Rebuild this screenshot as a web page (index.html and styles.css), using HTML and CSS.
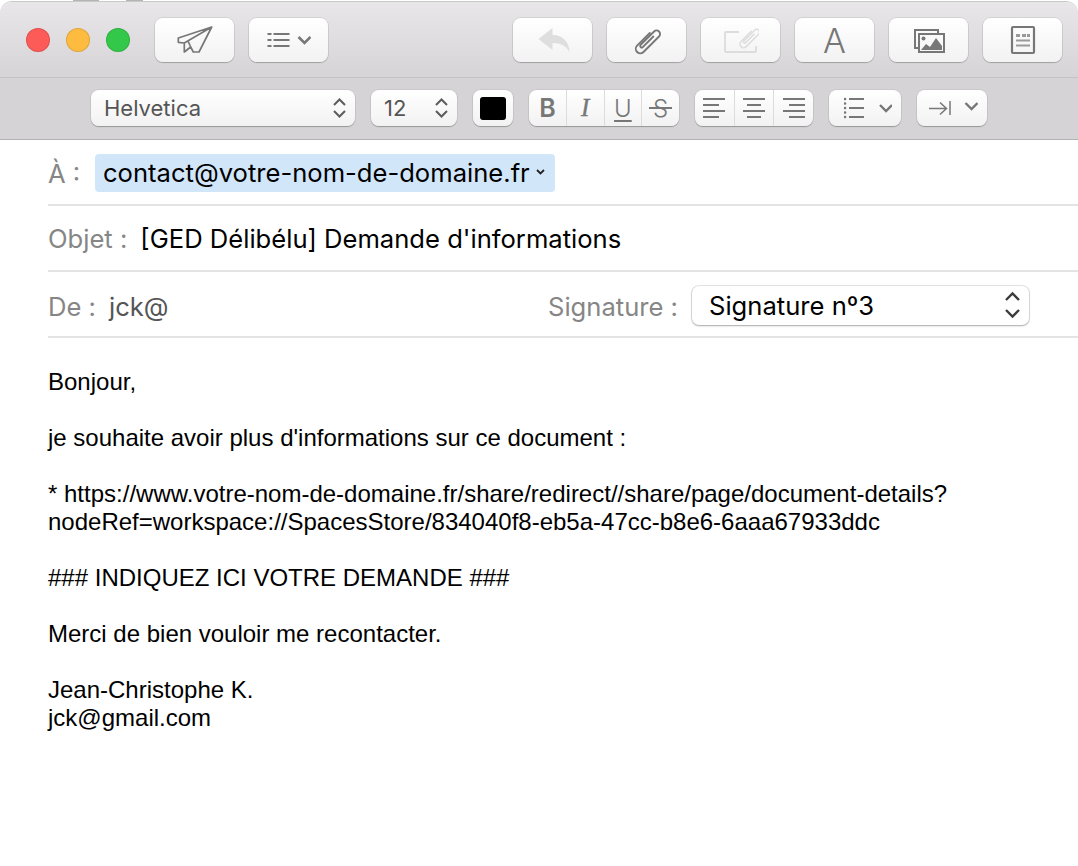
FILE: index.html
```html
<!DOCTYPE html>
<html lang="fr">
<head>
<meta charset="utf-8">
<title>Nouveau message</title>
<link rel="stylesheet" href="styles.css">
</head>
<body>
<div class="backdrop-tab tab-a"></div>
<div class="backdrop-tab tab-b"></div>
<header class="toolbar">
  <div class="main-row">
    <div class="lights">
      <span class="light red"></span>
      <span class="light yellow"></span>
      <span class="light green"></span>
    </div>
    <button class="tool">
      <svg width="36" height="28" viewBox="0 0 36 28" fill="none" stroke="#777" stroke-width="1.7" stroke-linejoin="round"><path d="M34.7 1 1.3 12v4.3l6 .7v9l6.4-5 2.6 5H22L34.7 1ZM34.700 1 7.300 17M13.700 21 11 15"/></svg>
    </button>
    <button class="tool">
      <svg width="44" height="16" viewBox="-.5 0 44 16" fill="none" stroke="#777" stroke-width="2"><path d="M0 2h4M6 2h16M0 8h4M6 8h16M0 14h4M6 14h16"/><path d="m31 5 6 6 6-6" stroke-width="2.600"/></svg>
    </button>
    <div class="spring"></div>
    <div class="tool-group">
      <button class="tool">
        <svg width="34" height="26" viewBox="-1.5 0 34 26" fill="#dedede"><path d="M1 12 15 1v7c10 0 17 7 17 17-3-6-9-9-17-9v7Z"/></svg>
      </button>
      <button class="tool">
        <svg width="30" height="30" viewBox="0 0 30 30" fill="none" stroke="#777" stroke-width="1.900"><path transform="translate(15 15) rotate(45)" d="M-3-7V11a4.500 4.500 0 0 0 9 0V-11a3.500 3.500 0 0 0-7 0V8a1.500 1.500 0 0 0 3 0V-7" stroke-linecap="round"/></svg>
      </button>
      <button class="tool">
        <svg width="36" height="30" viewBox="0 0 36 30" fill="none" stroke="#dcdcdc" stroke-width="1.800"><path d="M16 7H3a1 1 0 0 0-1 1v18a1 1 0 0 0 1 1h29a1 1 0 0 0 1-1v-5"/><path transform="translate(26 12) rotate(45) scale(.8)" d="M-3-7V11a4.500 4.500 0 0 0 9 0V-11a3.500 3.500 0 0 0-7 0V8a1.500 1.500 0 0 0 3 0V-7" stroke-linecap="round"/></svg>
      </button>
      <button class="tool letter">A</button>
      <button class="tool">
        <svg width="32" height="25" viewBox="0 0 32 25" fill="none" stroke="#777" stroke-width="2"><path d="M6 20H2V2h23v4"/><rect x="6" y="6" width="25" height="18"/><circle cx="10.500" cy="10.500" r="2" fill="#777" stroke="none"/><path d="M8 22l5-6 4 3 6-9 6 8v4Z" fill="#777" stroke="none"/></svg>
      </button>
      <button class="tool">
        <svg width="26" height="30" viewBox="0 0 26 30" fill="none" stroke="#777" stroke-width="2.200"><rect x="2" y="2" width="22" height="26" rx="1"/><path d="M6 10.500h4M12 10.500h4M17 10.500h3" stroke="#999" stroke-width="3"/><path d="M6 15.500h14M6 20.500h14" stroke="#999" stroke-width="1.800"/></svg>
      </button>
    </div>
  </div>
  <div class="format-row">
    <div class="control font-select">
      <span>Helvetica</span>
      <svg class="updown" width="13" height="20" viewBox="0 0 13 20" fill="none" stroke="#5c5c5c" stroke-width="2"><path d="m1 7 5.500-5.500L12 7M1 13l5.500 5.500L12 13"/></svg>
    </div>
    <div class="control size-select">
      <span>12</span>
      <svg class="updown" width="13" height="20" viewBox="0 0 13 20" fill="none" stroke="#5c5c5c" stroke-width="2"><path d="m1 7 5.500-5.500L12 7M1 13l5.500 5.500L12 13"/></svg>
    </div>
    <div class="control swatch"><span class="swatch-fill"></span></div>
    <div class="control segmented style-group">
      <span class="seg glyph-b">B</span>
      <span class="seg glyph-i">I</span>
      <span class="seg glyph-u">U</span>
      <span class="seg glyph-s">S</span>
    </div>
    <div class="control segmented align-group">
      <span class="seg"><svg width="22" height="20" viewBox="0 0 22 20" stroke="#777" stroke-width="2"><path d="M0 1h22M0 7h16M0 13h22M0 19h16"/></svg></span>
      <span class="seg"><svg width="22" height="20" viewBox="0 0 22 20" stroke="#777" stroke-width="2"><path d="M0 1h22M4 7h14M0 13h22M4 19h14"/></svg></span>
      <span class="seg"><svg width="22" height="20" viewBox="0 0 22 20" stroke="#777" stroke-width="2"><path d="M0 1h22M6 7h16M0 13h22M6 19h16"/></svg></span>
    </div>
    <div class="control list-select">
      <svg width="48" height="22" viewBox="0 0 48 22" fill="none"><path d="M5 2h15M5 11h15M5 20h15" stroke="#777" stroke-width="2"/><g fill="#777"><circle cx="1" cy="2" r="1.300"/><circle cx="1" cy="6.500" r="1.300"/><circle cx="1" cy="11" r="1.300"/><circle cx="1" cy="15.500" r="1.300"/><circle cx="1" cy="20" r="1.300"/></g><path d="m36 8 6 6 6-6" stroke="#777" stroke-width="2.400"/></svg>
    </div>
    <div class="control indent-select">
      <svg width="49" height="18" viewBox="0 0 49 18" fill="none" stroke="#777"><path d="M0 9.500h17M11 3.500l6.500 6-6.500 6M21 2v14" stroke-width="1.500"/><path d="m36.500 4 6 6 6-6" stroke-width="2.400"/></svg>
    </div>
  </div>
</header>
<main>
  <div class="field to-field">
    <span class="label">À :</span>
    <span class="chip">contact@votre-nom-de-domaine.fr<svg width="9" height="6" viewBox="0 0 9 6" fill="none" stroke="#222" stroke-width="1.800"><path d="m1 1 3.500 3.500L8 1"/></svg></span>
  </div>
  <div class="field subject-field">
    <span class="label">Objet :</span>
    <span class="value">[GED Délibélu] Demande d'informations</span>
  </div>
  <div class="field from-field">
    <span class="label">De :</span>
    <span class="value">jck@</span>
    <span class="label sig-label">Signature :</span>
    <div class="sig-select">
      <span>Signature nº3</span>
      <svg width="15" height="28" viewBox="0 0 15 28" fill="none" stroke="#3c3c3c" stroke-width="2.400"><path d="m1 9 6.500-6.500L14 9M1 19l6.500 6.500L14 19"/></svg>
    </div>
  </div>
  <article class="message">
    <p>Bonjour,</p>
    <p>je souhaite avoir plus d'informations sur ce document :</p>
    <p>* https://www.votre-nom-de-domaine.fr/share/redirect//share/page/document-details?<br>nodeRef=workspace://SpacesStore/834040f8-eb5a-47cc-b8e6-6aaa67933ddc</p>
    <p>### INDIQUEZ ICI VOTRE DEMANDE ###</p>
    <p>Merci de bien vouloir me recontacter.</p>
    <p>Jean-Christophe K.<br>jck@gmail.com</p>
  </article>
</main>
</body>
</html>
```

FILE: styles.css
```css
* { box-sizing: border-box; }
html, body { margin: 0; height: 100%; }
body {
  position: relative;
  padding-top: 1px;
  background: #fff;
  color: #000;
  font-family: Inter, "Liberation Sans", sans-serif;
  overflow: hidden;
}
.backdrop-tab { position: absolute; top: 0; height: 2px; background: #b4b4b4; }
.tab-a { left: 73px; width: 26px; }
.tab-b { left: 126px; width: 17px; }

.toolbar {
  position: relative;
  border-top: 1px solid #c9c9c9;
  border-radius: 12px 12px 0 0;
  border-bottom: 1px solid #b3b3b3;
  overflow: hidden;
}
.main-row {
  display: flex;
  align-items: center;
  height: 76px;
  padding: 1px 16px 0 26px;
  background: linear-gradient(#e8e6e8, #d6d4d6);
  border-bottom: 1px solid #c4c2c4;
}
.lights { display: flex; gap: 16px; margin-right: 25px; }
.light { width: 24px; height: 24px; border-radius: 50%; border: 1px solid rgba(0,0,0,.12); }
.red { background: #fc5b57; }
.yellow { background: #fdbc40; }
.green { background: #34c84a; }
.tool {
  display: flex;
  align-items: center;
  justify-content: center;
  width: 79px;
  height: 44px;
  padding: 0;
  margin-right: 15px;
  border: 0;
  border-radius: 8px;
  background: linear-gradient(#fff, #f2f2f2);
  box-shadow: 0 0 0 1px rgba(0,0,0,.07), 0 1px 1px rgba(0,0,0,.2);
}
.spring { flex: 1; }
.tool-group { display: flex; }
.tool-group .tool:last-child { margin-right: 0; }
.letter { color: #777; font: 350 34px Inter, "Liberation Sans", sans-serif; }

.format-row {
  display: flex;
  align-items: center;
  gap: 16px;
  height: 61px;
  padding: 0 0 1px 91px;
  background: #d5d3d5;
}
.control {
  display: flex;
  align-items: center;
  height: 36px;
  border-radius: 8px;
  background: linear-gradient(#fff, #f2f2f2);
  box-shadow: 0 0 0 1px rgba(0,0,0,.05), 0 1px 1px rgba(0,0,0,.25);
  color: #555;
  font-size: 22px;
}
.font-select { width: 264px; padding: 0 9px 0 13px; justify-content: space-between; }
.size-select { width: 86px; padding: 0 9px 0 13px; justify-content: space-between; }
.swatch { width: 40px; justify-content: center; }
.swatch-fill { width: 26px; height: 23px; border-radius: 3px; background: #000; }
.segmented { padding: 0; overflow: hidden; }
.seg {
  position: relative;
  display: flex;
  align-items: center;
  justify-content: center;
  flex: 1;
  height: 100%;
  border-left: 1px solid #dcdcdc;
  color: #777;
}
.seg:first-child { border-left: 0; }
.style-group { width: 150px; }
.align-group { width: 118px; }
.glyph-b { font: 600 25px Inter, sans-serif; }
.glyph-i { font: italic 400 25px "Liberation Serif", serif; -webkit-text-stroke: .4px #777; }
.glyph-u { font: 300 24px Inter, sans-serif; text-decoration: underline; text-decoration-thickness: 2px; text-underline-offset: 3px; }
.glyph-s { font: 300 24px Inter, sans-serif; }
.glyph-s::after {
  content: "";
  position: absolute;
  left: 7px;
  right: 7px;
  top: 17px;
  height: 2px;
  background: #777;
}
.list-select { width: 72px; padding-left: 15px; }
.indent-select { width: 70px; padding-left: 12px; }

.field {
  display: flex;
  align-items: center;
  height: 66px;
  margin-left: 48px;
  border-bottom: 2px solid #e3e3e3;
  font-size: 25.6px;
}
.label { color: #868686; }
.to-field { padding-top: 2px; }
.to-field .label { width: 47px; }
.chip {
  display: flex;
  align-items: center;
  gap: 6px;
  width: 460px;
  height: 38px;
  padding: 0 0 2px 8px;
  border-radius: 4px;
  background: #d2e6fa;
}
.subject-field .value { margin-left: 13px; }
.from-field { padding-top: 4px; }
.from-field .value { margin-left: 13px; color: #555; }
.sig-label { margin-left: auto; }
.sig-select {
  display: flex;
  align-items: center;
  justify-content: space-between;
  width: 337px;
  height: 39px;
  margin: 0 49px 2px 14px;
  padding: 0 9px 0 17px;
  border-radius: 7px;
  background: #fff;
  box-shadow: 0 0 0 1px rgba(0,0,0,.1), 0 1px 2px rgba(0,0,0,.25);
}
.message {
  padding: 30px 48px 0;
  font: 24px/28px "Liberation Sans", sans-serif;
}
.message p { margin: 0 0 28px; }
```
